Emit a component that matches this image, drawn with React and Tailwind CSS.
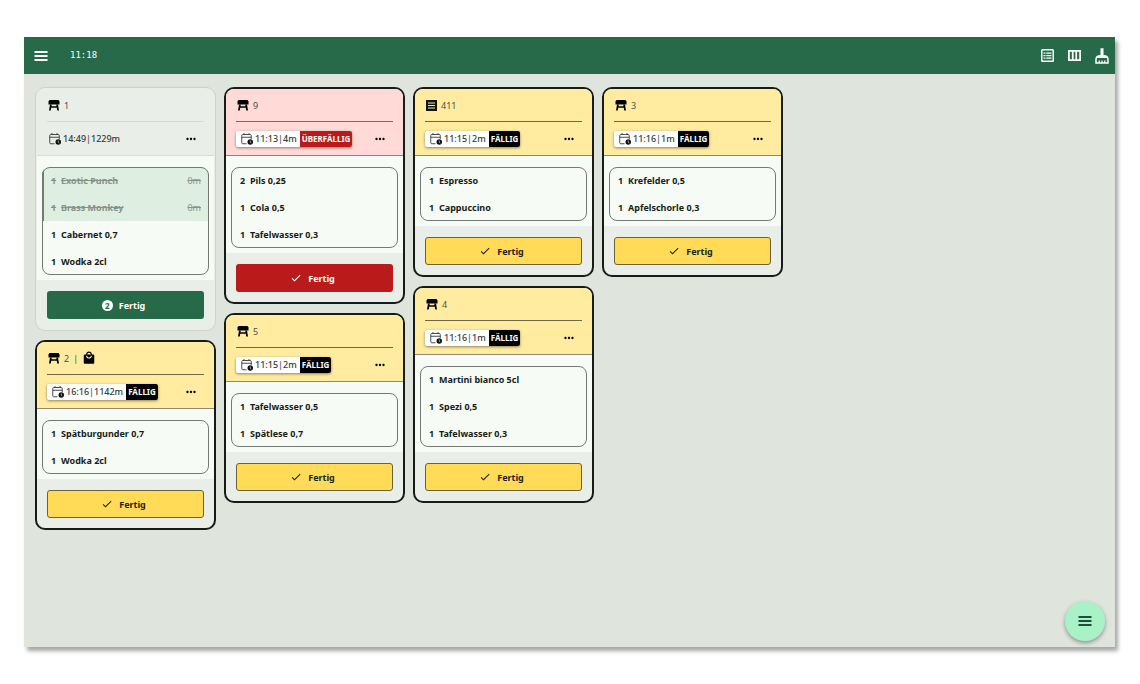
import { useState } from "react";
import clsx from "clsx";
import {
  MdCheck,
  MdLocalMall,
  MdMoreHoriz,
} from "react-icons/md";

const columns = [
  [
    {
      id: 1,
      label: "1",
      time: "14:49",
      age: "1229m",
      status: "idle",
      selected: 2,
      items: [
        { qty: 1, name: "Exotic Punch", done: "0m" },
        { qty: 1, name: "Brass Monkey", done: "0m" },
        { qty: 1, name: "Cabernet 0,7" },
        { qty: 1, name: "Wodka 2cl" },
      ],
    },
    {
      id: 2,
      label: "2",
      takeaway: true,
      time: "16:16",
      age: "1142m",
      status: "due",
      items: [
        { qty: 1, name: "Spätburgunder 0,7" },
        { qty: 1, name: "Wodka 2cl" },
      ],
    },
  ],
  [
    {
      id: 3,
      label: "9",
      time: "11:13",
      age: "4m",
      status: "overdue",
      items: [
        { qty: 2, name: "Pils 0,25" },
        { qty: 1, name: "Cola 0,5" },
        { qty: 1, name: "Tafelwasser 0,3" },
      ],
    },
    {
      id: 4,
      label: "5",
      time: "11:15",
      age: "2m",
      status: "due",
      items: [
        { qty: 1, name: "Tafelwasser 0,5" },
        { qty: 1, name: "Spätlese 0,7" },
      ],
    },
  ],
  [
    {
      id: 5,
      label: "411",
      receipt: true,
      time: "11:15",
      age: "2m",
      status: "due",
      items: [
        { qty: 1, name: "Espresso" },
        { qty: 1, name: "Cappuccino" },
      ],
    },
    {
      id: 6,
      label: "4",
      time: "11:16",
      age: "1m",
      status: "due",
      items: [
        { qty: 1, name: "Martini bianco 5cl" },
        { qty: 1, name: "Spezi 0,5" },
        { qty: 1, name: "Tafelwasser 0,3" },
      ],
    },
  ],
  [
    {
      id: 7,
      label: "3",
      time: "11:16",
      age: "1m",
      status: "due",
      items: [
        { qty: 1, name: "Krefelder 0,5" },
        { qty: 1, name: "Apfelschorle 0,3" },
      ],
    },
  ],
];

const styles = {
  idle: {
    card: "border border-[#cdd3cd] p-px",
    head: "border-[#d5dbd5]",
    line: "bg-[#d3dad4]",
    button: "bg-[#276a4a] text-white",
  },
  due: {
    card: "border-2 border-[#171c19]",
    head: "bg-[#ffeca0] border-[#8c8a72]",
    line: "bg-[#6f6846]",
    button: "bg-[#ffdb58] text-[#1d211e] border border-[#6a6238]",
    badge: "bg-black",
    badgeText: "FÄLLIG",
  },
  overdue: {
    card: "border-2 border-[#171c19]",
    head: "bg-[#ffdad6] border-[#8c8280]",
    line: "bg-[#806b69]",
    button: "bg-[#ba1a1a] text-white",
    badge: "bg-[#ba1a1a]",
    badgeText: "ÜBERFÄLLIG",
  },
};

function MenuIcon() {
  return (
    <svg viewBox="0 0 14 10" className="h-2.5 w-3.5" fill="currentColor">
      <path d="M.5 0h13v2H.5zM.5 4h13v2H.5zM.5 8h13v2H.5z" />
    </svg>
  );
}

function TableIcon() {
  return (
    <svg viewBox="0 0 24 22" className="h-[11px] w-3" fill="currentColor">
      <path d="M3 0h18l2 3v6H1V3z" />
      <path d="M4 9h3.500l-.4 3.500h9.800L16.500 9H20l2 12h-3.500l-1-5.500h-11L5.500 21H2z" />
    </svg>
  );
}

function ReceiptIcon() {
  return (
    <svg viewBox="0 0 22 22" className="size-[11px]">
      <path d="M0 0h22v22H0z" fill="#111408" />
      <path d="M4 6h14M4 11h14M4 16h14" stroke="#ffeca0" strokeWidth="2" />
    </svg>
  );
}

function CalendarClockIcon() {
  return (
    <svg viewBox="0 0 24 24" className="size-3" fill="none" stroke="#343a36" strokeWidth="1.8">
      <path d="M11 21.500H3.500a2 2 0 0 1-2-2V5a2 2 0 0 1 2-2h15a2 2 0 0 1 2 2v7M1.500 8.500h19M6 0v3M16 0v3" />
      <circle cx="18.500" cy="18" r="5.500" fill="#111" stroke="none" />
      <path d="M18.500 15v3.500l2 1.500" stroke="#fff" strokeWidth="1.200" />
    </svg>
  );
}

function ListIcon() {
  return (
    <svg viewBox="0 0 26 26" className="size-[13px]" fill="none" stroke="currentColor">
      <rect x="1.500" y="1.500" width="23" height="23" rx="1.500" strokeWidth="3" />
      <path d="M5 8h4M10.500 8H21M5 13h4M10.500 13H21M5 18h4M10.500 18H21" strokeWidth="2.500" />
    </svg>
  );
}

function ColumnsIcon() {
  return (
    <svg viewBox="0 0 26 22" className="h-[11px] w-[13px]" fill="none" stroke="currentColor" strokeWidth="3.500">
      <path d="M1.800 1.800h22.400v18.400H1.800zM9.500 1.800v18.400M16.500 1.800v18.400" />
    </svg>
  );
}

function BrushIcon() {
  return (
    <svg viewBox="0 0 28 32" className="h-4 w-3.5" fill="none" stroke="currentColor" strokeWidth="3">
      <path d="M11.500 1h5v14h-5z" fill="currentColor" strokeWidth="1" />
      <path d="M9 16h10c4 0 7 3 7 7v7H2v-7c0-4 3-7 7-7z" />
      <path d="M3 20c1-4 3-5 6-5h10c3 0 5 1 6 5z" fill="currentColor" stroke="none" />
      <path d="M8.500 30v-5M14 30v-5M19.500 30v-5" strokeWidth="2.500" />
    </svg>
  );
}

function OrderCard({ order }) {
  const style = styles[order.status];
  const idle = order.status === "idle";

  return (
    <article className={clsx("overflow-hidden rounded-[10px] bg-[#e9eee9]", style.card)}>
      <header className={clsx("border-b px-2.5", style.head)}>
        <h2 className="flex h-8 items-center gap-1 font-normal text-[#4a4f45]">
          <span className="pl-px text-black">{order.receipt ? <ReceiptIcon /> : <TableIcon />}</span>
          {order.label}
          {order.takeaway && (
            <>
              <span>|</span>
              <MdLocalMall className="size-3.5 text-black" />
            </>
          )}
        </h2>
        <div className={clsx("h-px", style.line)} />
        <div className="flex h-[33px] items-center justify-between">
          <div
            className={clsx(
              "flex h-4 items-center rounded-xs font-medium whitespace-nowrap text-[#353b36]",
              !idle && "bg-white shadow-[0_1px_3px_rgba(0,0,0,0.45)]"
            )}
          >
            <div className={clsx("flex items-center gap-0.5", idle ? "pl-0.5" : "pr-[3px] pl-[5px]")}>
              <CalendarClockIcon />
              <span className="flex">
                {order.time}
                <span className="font-normal">|</span>
                {order.age}
              </span>
            </div>
            {style.badgeText && (
              <span
                className={clsx(
                  "flex h-4 items-center rounded-r-xs px-0.5 text-[8px] font-bold text-white",
                  style.badge
                )}
              >
                {style.badgeText}
              </span>
            )}
          </div>
          <button type="button" aria-label="Mehr" className="px-1.5 text-black">
            <MdMoreHoriz className="size-3.5" />
          </button>
        </div>
      </header>

      <div className="bg-[#f6fbf5] px-[5px] pt-[11px] pb-[5px]">
        <ul className="overflow-hidden rounded-lg outline-1 -outline-offset-1 outline-[#737a74]">
          {order.items.map((item) => (
            <li
              key={item.name}
              className={clsx(
                "flex h-[27px] items-center border-l-2 pr-2 pl-[7px] font-bold",
                item.done
                  ? "border-[#737a74] bg-[#deeee1] text-[#87928a] line-through"
                  : "border-transparent text-[#171d19]"
              )}
            >
              <span className="w-2.5">{item.qty}</span>
              <span className="flex-1">{item.name}</span>
              {item.done && <span className="font-normal">{item.done}</span>}
            </li>
          ))}
        </ul>
      </div>

      <footer className="px-2.5 pt-[11px] pb-2.5">
        <button
          type="button"
          className={clsx(
            "flex h-7 w-full items-center justify-center gap-1.5 rounded-[3px] pr-1 font-bold",
            style.button
          )}
        >
          {order.selected ? (
            <span className="flex size-[11px] items-center justify-center rounded-full bg-white text-[8px] text-[#276a4a]">
              {order.selected}
            </span>
          ) : (
            <MdCheck className="size-3" />
          )}
          Fertig
        </button>
      </footer>
    </article>
  );
}

function App() {
  const [orders] = useState(columns);

  return (
    <div className="flex min-h-screen flex-col bg-white pt-[37px] pr-[25px] pb-[37px] pl-6 font-['Noto_Sans',sans-serif] text-[9px] leading-[13px]">
      <div className="relative flex flex-1 flex-col bg-[#dfe4dd] shadow-[3px_4px_4px_rgba(0,0,0,0.35)]">
        <header className="flex h-[37px] items-center justify-between bg-[#276a4a] px-1.5 text-white">
          <div className="flex items-center gap-[22px] pl-1">
            <button type="button" aria-label="Menü">
              <MenuIcon />
            </button>
            <time className="font-['DejaVu_Sans_Mono',monospace]">11:18</time>
          </div>
          <nav className="flex items-center gap-3.5">
            <button type="button" aria-label="Liste">
              <ListIcon />
            </button>
            <button type="button" aria-label="Spalten">
              <ColumnsIcon />
            </button>
            <button type="button" aria-label="Aufräumen">
              <BrushIcon />
            </button>
          </nav>
        </header>

        <main className="flex flex-wrap items-start gap-2 px-[11px] pt-[13px] pb-12">
          {orders.map((column, i) => (
            <section key={i} className="flex w-[181px] flex-col gap-[9px]">
              {column.map((order) => (
                <OrderCard key={order.id} order={order} />
              ))}
            </section>
          ))}
        </main>

        <button
          type="button"
          aria-label="Aktionen"
          className="absolute right-2.5 bottom-1.5 flex size-10 items-center justify-center rounded-full bg-[#a9f2c7] text-[#1c5038] shadow-[0_2px_4px_rgba(0,0,0,0.35)]"
        >
          <MenuIcon />
        </button>
      </div>
    </div>
  );
}

export default App;
